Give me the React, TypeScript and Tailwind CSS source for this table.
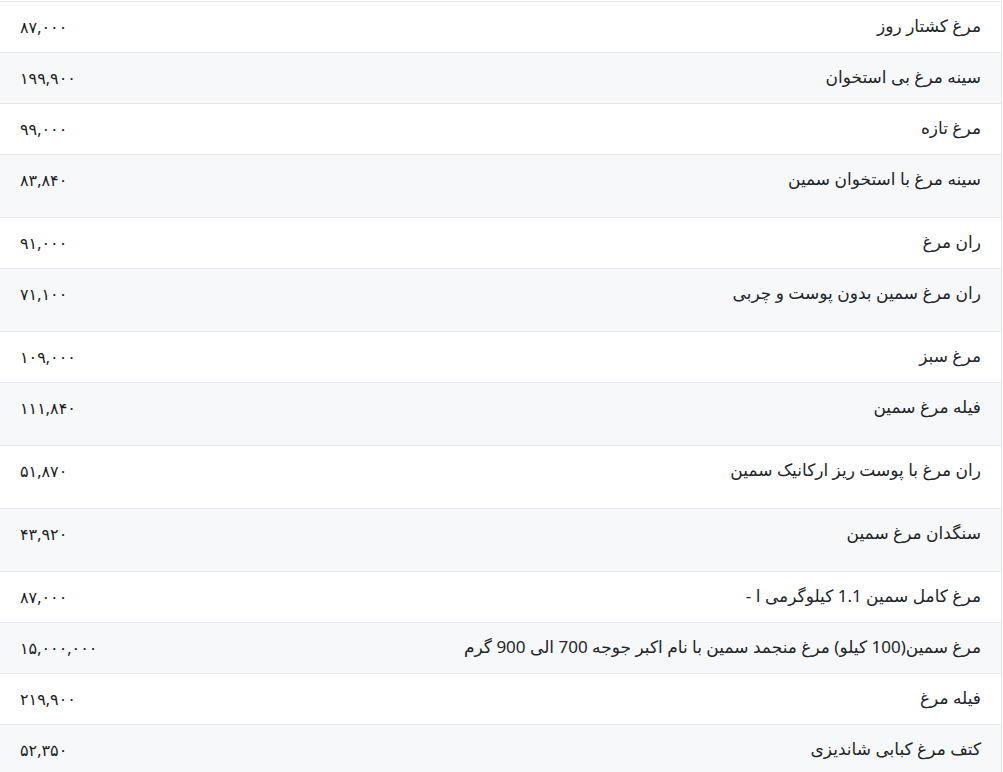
const rows: { name: string; price: string; tall?: boolean }[] = [
  { name: "مرغ کشتار روز", price: "۸۷,۰۰۰" },
  { name: "سینه مرغ بی استخوان", price: "۱۹۹,۹۰۰" },
  { name: "مرغ تازه", price: "۹۹,۰۰۰" },
  { name: "سینه مرغ با استخوان سمین", price: "۸۳,۸۴۰", tall: true },
  { name: "ران مرغ", price: "۹۱,۰۰۰" },
  { name: "ران مرغ سمین بدون پوست و چربی", price: "۷۱,۱۰۰", tall: true },
  { name: "مرغ سبز", price: "۱۰۹,۰۰۰" },
  { name: "فیله مرغ سمین", price: "۱۱۱,۸۴۰", tall: true },
  { name: "ران مرغ با پوست ریز ارکانیک سمین", price: "۵۱,۸۷۰", tall: true },
  { name: "سنگدان مرغ سمین", price: "۴۳,۹۲۰", tall: true },
  { name: "مرغ کامل سمین 1.1 کیلوگرمی ا -", price: "۸۷,۰۰۰" },
  { name: "مرغ سمین(100 کیلو) مرغ منجمد سمین با نام اکبر جوجه 700 الی 900 گرم", price: "۱۵,۰۰۰,۰۰۰" },
  { name: "فیله مرغ", price: "۲۱۹,۹۰۰" },
  { name: "کتف مرغ کبابی شاندیزی", price: "۵۲,۳۵۰" },
];

export default function App() {
  return (
    <div className="h-[772px] w-[1003px] overflow-hidden bg-white" style={{ fontFamily: '"Noto Sans", "DejaVu Sans", sans-serif' }}>
      <div className="h-px bg-white" />
      <div dir="rtl" className="w-[1002px] border-t border-r border-[#e3e6ea] text-[#212529]">
        {rows.map((row, i) => (
          <div
            key={i}
            className={[
              "flex items-start justify-between border-b border-[#e3e6ea]",
              row.tall ? "h-[63px]" : "h-[51px]",
              i % 2 === 1 ? "bg-[#f7f8fa]" : "bg-white",
            ].join(" ")}
          >
            <div className="pr-5 pt-[11px] text-[17px] leading-[26px]">{row.name}</div>
            <div className="pl-5 pt-3 text-[16px] leading-[26px] text-[#1a1d21]">{row.price}</div>
          </div>
        ))}
      </div>
      <div className="h-px bg-[#a5b5cb]" />
      <div className="h-[2px] bg-[#dce4ee]" />
    </div>
  );
}
